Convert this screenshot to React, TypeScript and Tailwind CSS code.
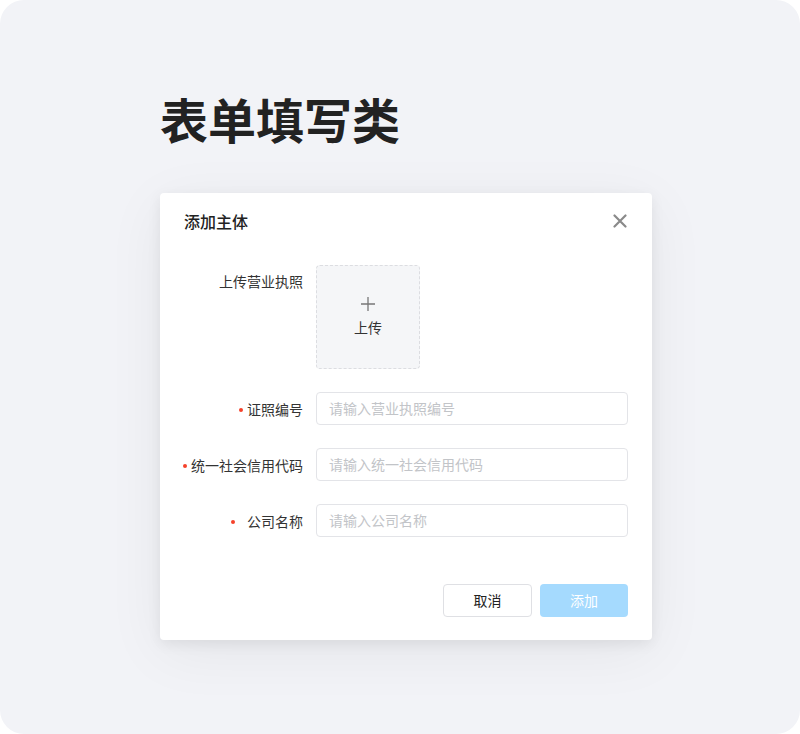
import React from "react";

const font = { fontFamily: '"Noto Sans CJK SC", "Noto Sans", sans-serif' };

function Dot() {
  return <span className="mr-[4px] inline-block h-[4px] w-[4px] translate-y-[-3px] rounded-full bg-[#f5412b]" />;
}

function Field({
  label,
  placeholder,
  spaced,
}: {
  label: string;
  placeholder: string;
  spaced?: boolean;
}) {
  return (
    <div className="flex items-center">
      <label className="w-[156px] pr-[13px] text-right text-[14px] leading-[32px] text-[#333]">
        <Dot />
        {spaced ? <span className="inline-block w-[8px]" /> : null}
        {label}
      </label>
      <div className="flex h-[33px] w-[312px] items-center rounded-[4px] border border-[#e3e4e8] px-[12px] text-[14px] text-[#c2c4c8]">
        {placeholder}
      </div>
    </div>
  );
}

export default function App() {
  return (
    <div className="h-[734px] w-[800px] bg-white" style={font}>
      <div className="flex h-full flex-col rounded-[24px] bg-[#f2f3f7] pl-[160px] pt-[94px]">
        <h1 className="text-[48px] font-bold leading-[48px] text-[#222]">
          表单填写类
        </h1>

        <div className="mt-[51px] flex h-[447px] w-[492px] flex-col rounded-[4px] bg-white shadow-[0_4px_14px_rgba(0,0,0,0.07),0_12px_60px_rgba(0,0,0,0.06)]">
          <div className="flex h-[56px] items-center justify-between pl-[24px] pr-[25px]">
            <span className="text-[16px] font-medium text-[#222]">添加主体</span>
            <svg width="14" height="14" viewBox="0 0 14 14">
              <path
                d="M1.5 1.5L12.5 12.5M12.5 1.5L1.5 12.5"
                stroke="#8a8a8a"
                strokeWidth="2.2"
                strokeLinecap="round"
              />
            </svg>
          </div>

          <div className="mt-[16px] flex flex-col gap-[23px]">
            <div className="flex items-start">
              <label className="w-[156px] pr-[13px] pt-[4px] text-right text-[14px] leading-[24px] text-[#333]">
                上传营业执照
              </label>
              <div className="flex h-[104px] w-[104px] flex-col items-center justify-center rounded-[4px] border border-dashed border-[#dcdde1] bg-[#f5f6f8]">
                <svg width="14" height="14" viewBox="0 0 14 14">
                  <path d="M7 0V14M0 7H14" stroke="#777" strokeWidth="1.3" />
                </svg>
                <span className="mt-[6px] text-[14px] leading-[20px] text-[#333]">
                  上传
                </span>
              </div>
            </div>

            <Field label="证照编号" placeholder="请输入营业执照编号" />
            <Field label="统一社会信用代码" placeholder="请输入统一社会信用代码" />
            <Field label="公司名称" placeholder="请输入公司名称" spaced />
          </div>

          <div className="mt-auto flex justify-end gap-[8px] px-[24px] pb-[23px]">
            <button className="h-[33px] w-[89px] rounded-[4px] border border-[#dfe0e4] bg-white text-[14px] text-[#222]">
              取消
            </button>
            <button className="h-[33px] w-[88px] rounded-[4px] bg-[#a5dafe] text-[14px] text-white">
              添加
            </button>
          </div>
        </div>
      </div>
    </div>
  );
}
